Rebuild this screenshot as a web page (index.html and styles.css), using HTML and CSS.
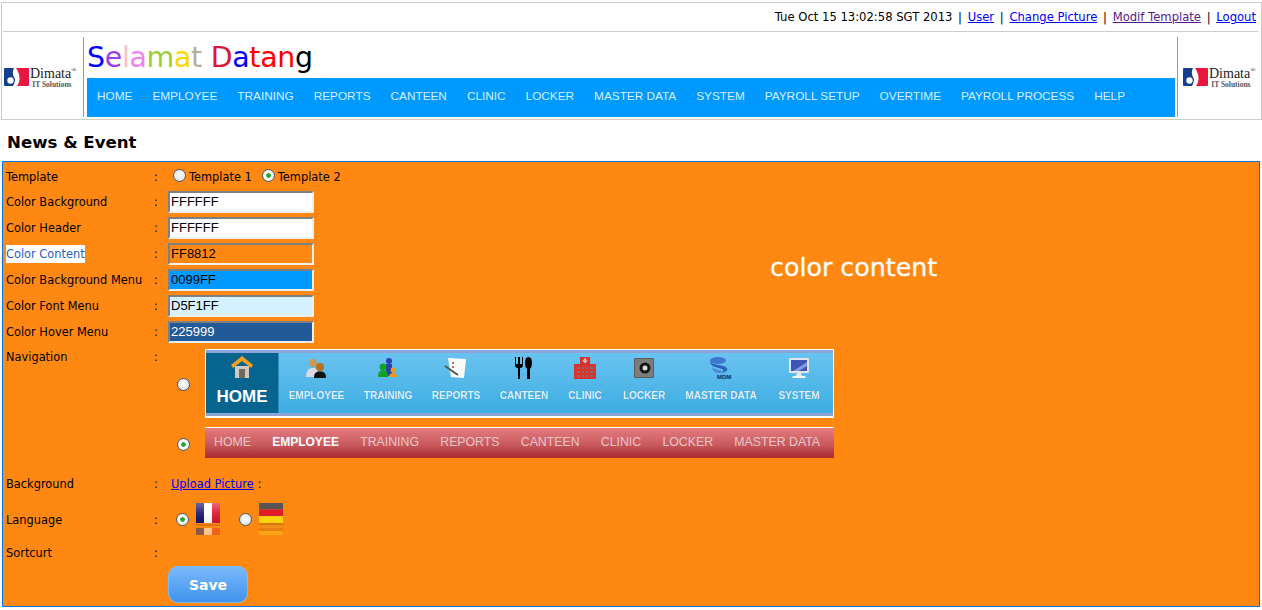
FILE: index.html
```html
<!DOCTYPE html>
<html lang="id">
<head>
<meta charset="utf-8">
<title>News &amp; Event</title>
<link rel="stylesheet" href="styles.css">
</head>
<body>
<header class="head">
  <div class="topbar">Tue Oct 15 13:02:58 SGT 2013<span class="sep">|</span><a href="#u">User</a><span class="sep">|</span><a href="#c">Change Picture</a><span class="sep">|</span><a class="visited" href="#m">Modif Template</a><span class="sep">|</span><a href="#l">Logout</a></div>
  <div class="brandrow">
    <div class="logo">
      <svg class="mark" viewBox="0 0 25 18" width="25" height="18"><path d="M0 1Q0 0 1 0H10C8 4 9 8 11 11 11 14 10 16 9 18H1Q0 18 0 17Z" fill="#123f8e"/><circle cx="6.500" cy="12.500" r="3.200" fill="#fff"/><path d="M12 0H24Q25 0 25 1V17Q25 18 24 18H13C17 13 16 6 12 0Z" fill="#e8173f"/></svg>
      <div class="wordmark"><span class="wm1">Dimata<sup>®</sup></span><span class="wm2">IT Solutions</span></div>
    </div>
    <div class="middle">
      <h1 class="welcome"><span class="c1">S</span><span class="c2">e</span><span class="c3">l</span><span class="c4">a</span><span class="c5">m</span><span class="c6">a</span><span class="c7">t</span> <span class="c8">D</span><span class="c1">a</span><span class="c9">t</span><span class="c9">a</span><span class="c9">n</span><span class="c0">g</span></h1>
      <nav class="menu"><a>HOME</a><a>EMPLOYEE</a><a>TRAINING</a><a>REPORTS</a><a>CANTEEN</a><a>CLINIC</a><a>LOCKER</a><a>MASTER DATA</a><a>SYSTEM</a><a>PAYROLL SETUP</a><a>OVERTIME</a><a>PAYROLL PROCESS</a><a>HELP</a></nav>
    </div>
    <div class="logo logo-right">
      <svg class="mark" viewBox="0 0 25 18" width="25" height="18"><path d="M0 1Q0 0 1 0H10C8 4 9 8 11 11 11 14 10 16 9 18H1Q0 18 0 17Z" fill="#123f8e"/><circle cx="6.500" cy="12.500" r="3.200" fill="#fff"/><path d="M12 0H24Q25 0 25 1V17Q25 18 24 18H13C17 13 16 6 12 0Z" fill="#e8173f"/></svg>
      <div class="wordmark"><span class="wm1">Dimata<sup>®</sup></span><span class="wm2">IT Solutions</span></div>
    </div>
  </div>
</header>
<h2 class="pagetitle">News &amp; Event</h2>
<main class="panel">
  <div class="overlay-note">color content</div>
  <div class="row r-template"><span class="lab">Template</span><span class="col">:</span><div class="val"><span class="radio"></span><span class="rt">Template 1</span><span class="radio on"></span><span class="rt">Template 2</span></div></div>
  <div class="row r-in"><span class="lab">Color Background</span><span class="col">:</span><div class="val"><span class="field f-white">FFFFFF</span></div></div>
  <div class="row r-in"><span class="lab">Color Header</span><span class="col">:</span><div class="val"><span class="field f-white">FFFFFF</span></div></div>
  <div class="row r-in"><span class="lab lab-hl">Color Content</span><span class="col">:</span><div class="val"><span class="field f-orange">FF8812</span></div></div>
  <div class="row r-in"><span class="lab">Color Background Menu</span><span class="col">:</span><div class="val"><span class="field f-blue">0099FF</span></div></div>
  <div class="row r-in"><span class="lab">Color Font Menu</span><span class="col">:</span><div class="val"><span class="field f-pale">D5F1FF</span></div></div>
  <div class="row r-in"><span class="lab">Color Hover Menu</span><span class="col">:</span><div class="val"><span class="field f-dark">225999</span></div></div>
  <div class="row r-nav"><span class="lab">Navigation</span><span class="col">:</span>
    <div class="val navs">
      <div class="navopt">
        <span class="radio"></span>
        <div class="nav1">
          <div class="n1-home">
            <svg viewBox="0 0 24 24" width="24" height="24"><path d="M5 11H19V23H5Z" fill="#cfcabd"/><path d="M9 14H15V23H9Z" fill="#6f6a60"/><path d="M12 1 23 10 21 13 12 6 3 13 1 10Z" fill="#f3a01e"/></svg>
            <b>HOME</b>
          </div>
          <div class="n1-item n-emp"><svg viewBox="0 0 24 24" width="24" height="24"><circle cx="8" cy="7" r="4" fill="#c79a56"/><path d="M1 21C1 14 4 12 8 12S13 14 13 21Z" fill="#d8d8e6"/><circle cx="15" cy="11" r="4" fill="#b8701e"/><path d="M9 22C9 17 11 15.500 15 15.500S21 17 21 22Z" fill="#111"/></svg><span>EMPLOYEE</span></div>
          <div class="n1-item n-tra"><svg viewBox="0 0 24 24" width="24" height="24"><circle cx="13" cy="5" r="3" fill="#2b3fb5"/><path d="M10 20V8H16V20Z" fill="#2b3fb5"/><circle cx="7" cy="11" r="3.500" fill="#14a020"/><path d="M2 21C2 16 4 14 7 14S12 16 12 21Z" fill="#14a020"/><circle cx="17" cy="14" r="2.500" fill="#f09a10"/><path d="M13 21C13 18 15 17 17 17S21 18 21 21Z" fill="#f09a10"/></svg><span>TRAINING</span></div>
          <div class="n1-item n-rep"><svg viewBox="0 0 24 24" width="24" height="24"><path d="M4 2 22 3 20 22 7 21Z" fill="#fbfbf8"/><path d="M8 7H10M8 11H10" stroke="#c33" stroke-width="1.500"/><path d="M1 10 14 19" stroke="#555" stroke-width="2"/></svg><span>REPORTS</span></div>
          <div class="n1-item n-can"><svg viewBox="0 0 24 24" width="24" height="24"><path d="M3 1V9Q3 12 6 12V23H8V12Q11 12 11 9V1H10V8H8V1H6V8H4V1Z" fill="#000"/><path d="M15 23V13Q13 11 13 7 13 1 16.500 1T20 7Q20 11 18 13V23Z" fill="#000"/></svg><span>CANTEEN</span></div>
          <div class="n1-item n-cli"><svg viewBox="0 0 24 24" width="24" height="24"><path d="M7 1H17V8H23V23H1V8H7Z" fill="#d9332e"/><path d="M11 2.500H13V7H11ZM9.700 3.700H14.300V5.700H9.700Z" fill="#e9b0ae"/><path d="M4 11H7V13H4ZM9 11H11V13H9ZM13 11H15V13H13ZM17 11H20V13H17ZM4 15H7V17H4ZM9 15H11V17H9ZM13 15H15V17H13ZM17 15H20V17H17ZM4 19H7V21H4ZM9 19H11V21H9ZM13 19H15V21H13ZM17 19H20V21H17Z" fill="#8a6a70"/></svg><span>CLINIC</span></div>
          <div class="n1-item n-loc"><svg viewBox="0 0 24 24" width="24" height="24"><rect x="2" y="2" width="20" height="20" rx="1" fill="#5d5d5d"/><rect x="3" y="3" width="18" height="18" fill="#7c7c7c"/><circle cx="13" cy="12" r="5.500" fill="#151515"/><circle cx="13" cy="12" r="2.500" fill="#ddd"/></svg><span>LOCKER</span></div>
          <div class="n1-item n-mas"><svg viewBox="0 0 26 24" width="26" height="24"><ellipse cx="10" cy="4.500" rx="8" ry="3.500" fill="#3f78cf"/><path d="M2 5C4 10 15 8 19 12 20 14 18 16 14 17 17 14 15 13 11 12 6 11 2 9 2 5Z" fill="#2f61b8"/><path d="M4 10C6 15 12 13 15 16 11 18 7 17 5 14Z" fill="#4f86d8"/><text x="9" y="23" class="mdm">MDM</text></svg><span>MASTER DATA</span></div>
          <div class="n1-item n-sys"><svg viewBox="0 0 24 24" width="24" height="24"><rect x="2" y="2" width="20" height="15" rx="1" fill="#dfe6ea"/><rect x="4" y="4" width="16" height="11" fill="#3e55b5"/><path d="M6 15 20 6V10L12 15Z" fill="#7f9bdc"/><path d="M10 17H14L15 20H9Z" fill="#e8e8e8"/><path d="M6 20H18L19 22H5Z" fill="#f4f4f4"/></svg><span>SYSTEM</span></div>
        </div>
      </div>
      <div class="navopt opt2">
        <span class="radio on"></span>
        <div class="nav2"><a>HOME</a><a class="act">EMPLOYEE</a><a>TRAINING</a><a>REPORTS</a><a>CANTEEN</a><a>CLINIC</a><a>LOCKER</a><a>MASTER DATA</a></div>
      </div>
    </div>
  </div>
  <div class="row r-bg"><span class="lab">Background</span><span class="col">:</span><div class="val"><a class="upload" href="#p">Upload Picture</a> :</div></div>
  <div class="row r-lang"><span class="lab">Language</span><span class="col">:</span>
    <div class="val langs">
      <span class="radio on"></span>
      <div class="flag"><svg viewBox="0 0 24 33" width="24" height="33"><defs><linearGradient id="gl" x1="0" y1="0" x2="0" y2="1"><stop offset="0" stop-color="#fff" stop-opacity=".35"/><stop offset=".5" stop-color="#fff" stop-opacity=".1"/><stop offset="1" stop-color="#000" stop-opacity=".05"/></linearGradient></defs><rect width="8" height="20" fill="#14146e"/><rect x="8" width="8" height="20" fill="#fff"/><rect x="16" width="8" height="20" fill="#dd1430"/><rect width="24" height="20" fill="url(#gl)"/><rect y="25" width="8" height="7" fill="#8a5a44"/><rect x="8" y="25" width="8" height="7" fill="#ffc48a"/><rect x="16" y="25" width="8" height="7" fill="#f0601f"/><rect y="21" width="24" height="2" fill="#d9740e"/></svg></div>
      <span class="radio second"></span>
      <div class="flag"><svg viewBox="0 0 24 33" width="24" height="33"><rect width="24" height="6.500" fill="#555"/><rect y="6.500" width="24" height="6.500" fill="#e01c2a"/><rect y="13" width="24" height="7" fill="#fbd20e"/><rect y="20" width="24" height="2" fill="#d9740e"/><rect y="22" width="24" height="3" fill="#f0901a"/><rect y="25" width="24" height="3" fill="#e8800f"/><rect y="28" width="24" height="4" fill="#fca614"/></svg></div>
    </div>
  </div>
  <div class="row r-short"><span class="lab">Sortcurt</span><span class="col">:</span><div class="val"></div></div>
  <div class="row r-save"><span class="lab"></span><span class="col"></span><div class="val"><button class="save" type="button">Save</button></div></div>
</main>
</body>
</html>
```

FILE: styles.css
```css
* { box-sizing: border-box; }
html, body { margin: 0; padding: 0; }
body { width: 1262px; height: 610px; overflow: hidden; background: #fff; font-family: "DejaVu Sans", sans-serif; font-size: 11.4px; color: #000; padding-top: 2px; }
a { color: #00f; }
a.visited { color: #551a8b; }

.head { margin: 0 0 0 1px; width: 1261px; height: 118px; border: 1px solid #ccc; padding: 0 1px; }
.topbar { height: 29px; margin: 0 2px 0 0; border-bottom: 1px solid #ccc; text-align: right; line-height: 29px; padding-right: 2px; font-size: 11.6px; white-space: nowrap; }
.sep { margin: 0 5.7px; }
.brandrow { display: flex; height: 80px; margin-top: 5px; }
.logo { width: 81px; flex: none; border-right: 1px solid #999; display: flex; align-items: center; gap: 1px; padding: 0 0 0 1px; }
.logo-right { width: 83px; border-right: 0; border-left: 1px solid #999; margin-left: 2px; padding-left: 5px; }
.mark { flex: none; }
.wordmark { display: flex; flex-direction: column; font-family: "Liberation Serif", serif; color: #222; line-height: 1; }
.wm1 { font-size: 14px; white-space: nowrap; }
.wm1 sup { font-size: 7px; line-height: 0; vertical-align: 6px; }
.wm2 { font-size: 7.5px; line-height: 7px; text-align: right; font-weight: bold; color: #555; margin-right: 5px; }
.middle { flex: 1; padding-left: 3px; display: flex; flex-direction: column; justify-content: flex-end; }
.welcome { margin: 0; font-size: 28.4px; font-weight: normal; line-height: 41px; font-family: "DejaVu Sans", sans-serif; letter-spacing: -.3px; white-space: nowrap; height: 41px; }
.c0 { color: #000; } .c1 { color: #00f; } .c2 { color: #9b3fe6; } .c3 { color: #ffc0cb; } .c4 { color: #ee82ee; } .c5 { color: #9acd32; } .c6 { color: #ffd700; } .c7 { color: #b5ad9a; } .c8 { color: #dc143c; } .c9 { color: #f00; }
.menu { height: 39px; background: #09f; display: flex; padding: 0 0 4px 10px; gap: 20px; align-items: center; font-family: "Liberation Sans", sans-serif; font-size: 11.8px; color: #d5f1ff; white-space: nowrap; }
.menu a { color: inherit; }

.pagetitle { margin: 0; height: 41px; padding: 12px 0 0 7px; font-size: 16.6px; line-height: 22px; font-weight: bold; }

.panel { position: relative; margin-left: 2px; width: 1258px; height: 446px; background: #ff8812; border: 1px solid #0a6fe0; padding: 2px 0 0 3px; color: #000; }
.overlay-note { position: absolute; left: 767px; top: 88px; color: #fff; font-size: 25.3px; line-height: 36px; -webkit-text-stroke: .3px #fff; }
.row { display: grid; grid-template-columns: 148px 14px 1fr; align-items: center; }
.lab { justify-self: start; white-space: nowrap; line-height: 18px; }
.lab-hl { background: #fff; color: #1f5fbf; }
.col { line-height: 18px; }
.r-template { height: 25px; }
.r-in { height: 26px; }
.val { display: flex; align-items: center; }
.rt { margin-right: 5px; }
.radio { display: inline-block; flex: none; width: 13px; height: 13px; border-radius: 50%; background: radial-gradient(circle at 50% 40%, #fff, #d8d8d8); border: 1px solid #4a5a6a; }
.radio.on { background: radial-gradient(circle, #23a733 0 2px, #fff 2.6px, #dcdcdc); }
.r-template .radio { margin-left: 5px; margin-right: 3px; margin-top: -3px; }
.field { display: block; width: 146px; height: 22px; border: 2px solid; border-color: #808080 #f0f0f0 #f0f0f0 #808080; line-height: 18px; padding-left: 1px; font-family: "Liberation Sans", sans-serif; font-size: 13px; }
.f-white { background: #fff; }
.f-orange { background: #ff8812; }
.f-blue { background: #09f; }
.f-pale { background: #d5f1ff; }
.f-dark { background: #225999; color: #fff; }

.r-nav { align-items: start; height: 126px; }
.r-nav > .lab, .r-nav > .col { margin-top: 3px; }
.navs { flex-direction: column; align-items: flex-start; padding-top: 4px; }
.navopt { display: flex; align-items: center; }
.navopt .radio { margin: 2px 15px 0 9px; }
.opt2 { margin-top: 9px; }
.opt2 .radio { margin-top: 3px; }
.nav1 { width: 629px; height: 69px; border: 1px solid #fff; border-bottom-width: 2px; background: linear-gradient(#6cc4f0, #3bace2); display: flex; box-shadow: inset 0 3px 0 #8aa4d6, inset 0 -3px 0 #8aa4d6; padding: 3px 0; color: #dff2ff; font-family: "Liberation Sans", sans-serif; font-weight: bold; font-size: 10px; }
.n1-home { width: 73px; flex: none; background: #06648f; border-right: 1px solid #2b8fc4; color: #fff; display: flex; flex-direction: column; align-items: center; padding-top: 2px; }
.n1-home b { font-size: 17px; line-height: 22px; margin-top: 7px; }
.n1-item { display: flex; flex-direction: column; align-items: center; flex: none; padding-top: 3px; text-shadow: 0 0 1px #2f86c0; }
.n1-item span { margin-top: 9px; line-height: 13px; white-space: nowrap; }
.n-emp { width: 75px; } .n-tra { width: 68px; } .n-rep { width: 68px; } .n-can { width: 68px; } .n-cli { width: 54px; } .n-loc { width: 64px; } .n-mas { width: 90px; } .n-sys { width: 66px; }
.mdm { font-family: "Liberation Sans", sans-serif; font-size: 6px; font-weight: bold; fill: #1a3f88; }
.nav2 { width: 629px; height: 31px; border-top: 1px solid #fff; background: linear-gradient(#e57c80, #c85a5e 55%, #a92a2e); display: flex; align-items: center; padding: 0 0 2px 9px; gap: 21.3px; font-family: "Liberation Sans", sans-serif; font-size: 12.3px; color: #eac6ca; white-space: nowrap; }
.nav2 a { color: inherit; }
.nav2 .act { color: #fff; font-weight: bold; font-size: 12px; }

.r-bg { height: 26px; }
.upload { margin-left: 3px; margin-right: 4px; }
.r-lang { height: 45px; }
.langs .radio { margin-left: 8px; margin-right: 7px; }
.langs .radio.second { margin-left: 19px; }
.flag { display: flex; height: 33px; }
.r-short { height: 21px; }
.r-save { height: 40px; align-items: start; }
.save { width: 80px; height: 37px; border: 1px solid #7dbdf5; border-radius: 10px; background: linear-gradient(#7ab8fb, #3f94ee); color: #fff; font-family: "DejaVu Sans", sans-serif; font-weight: bold; font-size: 14px; padding: 0; margin-top: 3px; }
```
